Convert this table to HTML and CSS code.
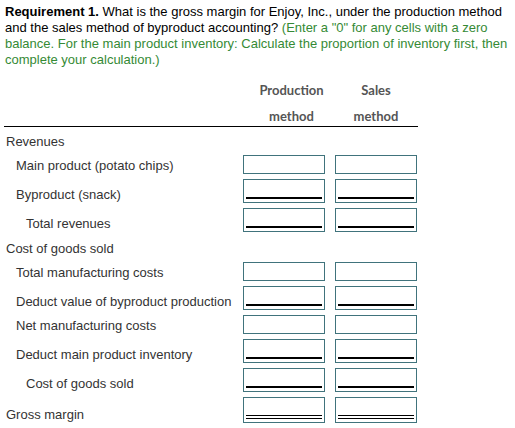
FILE: index.html
```html
<!DOCTYPE html>
<html>
<head>
<meta charset="utf-8">
<link rel="stylesheet" href="styles.css">
</head>
<body>
<div class="page">
  <p class="prompt"><b>Requirement 1.</b> What is the gross margin for Enjoy, Inc., under the production method and the sales method of byproduct accounting? <span class="hint">(Enter a "0" for any cells with a zero balance. For the main product inventory: Calculate the proportion of inventory first, then complete your calculation.)</span></p>
  <div class="sheet">
    <div class="head">
      <div></div>
      <div class="colhead c1"><span>Production</span><span>method</span></div>
      <div class="colhead"><span>Sales</span><span>method</span></div>
    </div>
    <div class="rows">
      <div class="row section"><span class="label l0">Revenues</span></div>
      <div class="row"><span class="label l1">Main product (potato chips)</span><div class="cell"></div><div class="cell"></div></div>
      <div class="row"><span class="label l1">Byproduct (snack)</span><div class="cell u"><div class="field"></div></div><div class="cell u"><div class="field"></div></div></div>
      <div class="row"><span class="label l2">Total revenues</span><div class="cell u"><div class="field"></div></div><div class="cell u"><div class="field"></div></div></div>
      <div class="row section"><span class="label l0">Cost of goods sold</span></div>
      <div class="row"><span class="label l1">Total manufacturing costs</span><div class="cell"></div><div class="cell"></div></div>
      <div class="row"><span class="label l1">Deduct value of byproduct production</span><div class="cell u"><div class="field"></div></div><div class="cell u"><div class="field"></div></div></div>
      <div class="row"><span class="label l1">Net manufacturing costs</span><div class="cell"></div><div class="cell"></div></div>
      <div class="row"><span class="label l1">Deduct main product inventory</span><div class="cell u"><div class="field"></div></div><div class="cell u"><div class="field"></div></div></div>
      <div class="row"><span class="label l2">Cost of goods sold</span><div class="cell u"><div class="field"></div></div><div class="cell u"><div class="field"></div></div></div>
      <div class="row"><span class="label l0">Gross margin</span><div class="cell d"><div class="field"></div></div><div class="cell d"><div class="field"></div></div></div>
    </div>
  </div>
</div>
</body>
</html>
```
FILE: styles.css
```css
html, body {
  margin: 0;
  padding: 0;
  background: #fff;
}
.page {
  padding: 4px 0 0 4px;
  font-family: "Liberation Sans", Arial, sans-serif;
  font-size: 13px;
  color: #000;
}
.prompt {
  margin: 0;
  padding-left: 1px;
  line-height: 16px;
}
.hint {
  color: #358a35;
}
.sheet {
  width: 414px;
}
.head {
  display: grid;
  grid-template-columns: 229px 82px 82px;
  column-gap: 10px;
  margin-top: 14px;
  padding-bottom: 2px;
  border-bottom: 1px solid #000;
}
.colhead {
  font-family: Lato, "Liberation Sans", sans-serif;
  font-weight: bold;
  color: #555;
  line-height: 16px;
  text-align: center;
}
.colhead.c1 {
  padding-left: 15px;
}
.colhead span {
  display: block;
}
.colhead span + span {
  margin-top: 10px;
}
.rows {
  display: flex;
  flex-direction: column;
  gap: 5px;
  padding-top: 3px;
}
.row {
  display: grid;
  grid-template-columns: 229px 82px 82px;
  column-gap: 10px;
  align-items: end;
}
.row.section {
  height: 20px;
}
.label {
  line-height: 16px;
  color: #333;
  white-space: nowrap;
}
.l0 { padding-left: 2px; }
.l1 { padding-left: 12px; }
.l2 { padding-left: 22px; }
.cell {
  box-sizing: border-box;
  height: 19px;
  border: 1px solid #40737c;
  padding: 0 2px;
  background: #fff;
}
.cell.u, .cell.d {
  height: auto;
  padding-bottom: 3px;
}
.cell .field {
  height: 17px;
}
.cell.u .field {
  border-bottom: 2px solid #000;
}
.cell.d .field {
  border-bottom: 4px double #000;
}
```
